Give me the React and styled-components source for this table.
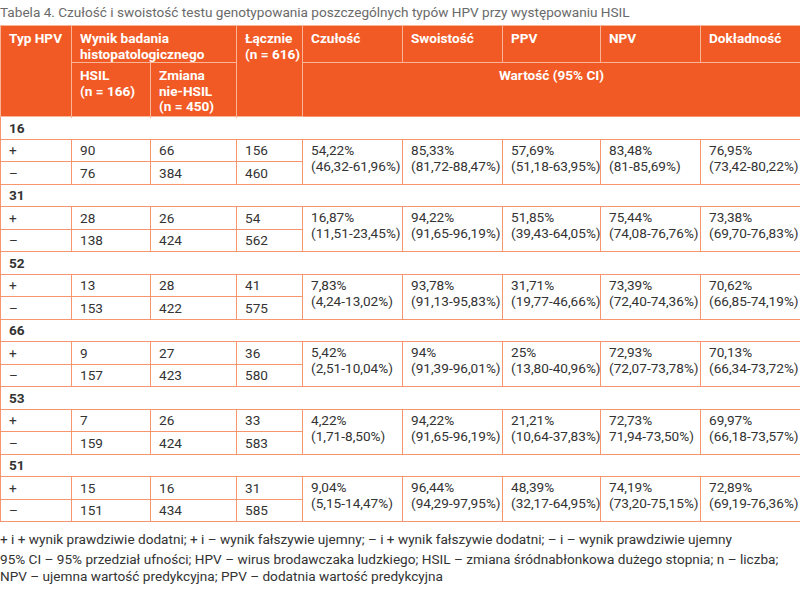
import React, { Fragment } from 'react';
import styled, { createGlobalStyle } from 'styled-components';

const GlobalStyle = createGlobalStyle`
  body {
    margin: 0;
    background: #fff;
    font-family: Roboto, "Liberation Sans", sans-serif;
  }
`;

//Data
const groups = [
  {
    type: '16',
    plus: ['90', '66', '156'],
    minus: ['76', '384', '460'],
    stats: [['54,22%', '(46,32-61,96%)'], ['85,33%', '(81,72-88,47%)'], ['57,69%', '(51,18-63,95%)'], ['83,48%', '(81-85,69%)'], ['76,95%', '(73,42-80,22%)']],
  },
  {
    type: '31',
    plus: ['28', '26', '54'],
    minus: ['138', '424', '562'],
    stats: [['16,87%', '(11,51-23,45%)'], ['94,22%', '(91,65-96,19%)'], ['51,85%', '(39,43-64,05%)'], ['75,44%', '(74,08-76,76%)'], ['73,38%', '(69,70-76,83%)']],
  },
  {
    type: '52',
    plus: ['13', '28', '41'],
    minus: ['153', '422', '575'],
    stats: [['7,83%', '(4,24-13,02%)'], ['93,78%', '(91,13-95,83%)'], ['31,71%', '(19,77-46,66%)'], ['73,39%', '(72,40-74,36%)'], ['70,62%', '(66,85-74,19%)']],
  },
  {
    type: '66',
    plus: ['9', '27', '36'],
    minus: ['157', '423', '580'],
    stats: [['5,42%', '(2,51-10,04%)'], ['94%', '(91,39-96,01%)'], ['25%', '(13,80-40,96%)'], ['72,93%', '(72,07-73,78%)'], ['70,13%', '(66,34-73,72%)']],
  },
  {
    type: '53',
    plus: ['7', '26', '33'],
    minus: ['159', '424', '583'],
    stats: [['4,22%', '(1,71-8,50%)'], ['94,22%', '(91,65-96,19%)'], ['21,21%', '(10,64-37,83%)'], ['72,73%', '71,94-73,50%)'], ['69,97%', '(66,18-73,57%)']],
  },
  {
    type: '51',
    plus: ['15', '16', '31'],
    minus: ['151', '434', '585'],
    stats: [['9,04%', '(5,15-14,47%)'], ['96,44%', '(94,29-97,95%)'], ['48,39%', '(32,17-64,95%)'], ['74,19%', '(73,20-75,15%)'], ['72,89%', '(69,19-76,36%)']],
  },
];

const widths = [71, 79, 86, 66, 100, 100, 98, 100, 100];

const App = () => {
  return (
    <Fragment>
      <GlobalStyle />
      <Page>
        <Caption>Tabela 4. Czułość i swoistość testu genotypowania poszczególnych typów HPV przy występowaniu HSIL</Caption>
        <Table>
          <colgroup>
            {widths.map((w, i) => <col key={i} style={{ width: w }} />)}
          </colgroup>
          <thead>
            <tr>
              <Th rowSpan={3}>Typ HPV</Th>
              <Th colSpan={2} $h={36}>Wynik badania<br />histopatologicznego</Th>
              <Th rowSpan={3} $nowrap>Łącznie<br />(n = 616)</Th>
              <Th $h={36}>Czułość</Th>
              <Th>Swoistość</Th>
              <Th>PPV</Th>
              <Th>NPV</Th>
              <Th>Dokładność</Th>
            </tr>
            <tr>
              <Th rowSpan={2}>HSIL<br />(n = 166)</Th>
              <Th rowSpan={2}>Zmiana<br />nie-HSIL<br />(n = 450)</Th>
              <Th colSpan={5} $center $h={54}>Wartość (95% CI)</Th>
            </tr>
            <tr />
          </thead>
          <tbody>
            {groups.map(g => (
              <Fragment key={g.type}>
                <tr>
                  <GroupCell colSpan={9}>{g.type}</GroupCell>
                </tr>
                <tr>
                  <Td>+</Td>
                  {g.plus.map((v, i) => <Td key={i}>{v}</Td>)}
                  {g.stats.map((s, i) => (
                    <StatCell key={i} rowSpan={2}>{s[0]}<br />{s[1]}</StatCell>
                  ))}
                </tr>
                <tr>
                  <Td>–</Td>
                  {g.minus.map((v, i) => <Td key={i}>{v}</Td>)}
                </tr>
              </Fragment>
            ))}
          </tbody>
        </Table>
        <Notes>
          <p>+ i + wynik prawdziwie dodatni; + i – wynik fałszywie ujemny; – i + wynik fałszywie dodatni; – i – wynik prawdziwie ujemny</p>
          <p>95% CI – 95% przedział ufności; HPV – wirus brodawczaka ludzkiego; HSIL – zmiana śródnabłonkowa dużego stopnia; n – liczba; NPV – ujemna wartość predykcyjna; PPV – dodatnia wartość predykcyjna</p>
        </Notes>
      </Page>
    </Fragment>
  );
};

const Page = styled.div`
  width: 800px;
  height: 593px;
  overflow: hidden;
  color: #333;
`;

const Caption = styled.div`
  font-size: 13.6px;
  line-height: 16px;
  color: #6a6a6a;
  padding: 4px 0 0 0;
  height: 21px;
`;

const Table = styled.table`
  width: 800px;
  table-layout: fixed;
  border-collapse: collapse;
  font-size: 13.6px;
  border: 1px solid #f4703c;
`;

const Th = styled.th`
  background: #f15a24;
  color: #fff;
  font-weight: 700;
  text-align: ${p => (p.$center ? 'center' : 'left')};
  vertical-align: top;
  line-height: 15.5px;
  padding: 5px ${p => (p.$nowrap ? '4px' : '8px')} 0 8px;
  white-space: ${p => (p.$nowrap ? 'nowrap' : 'normal')};
  height: ${p => (p.$h ? `${p.$h}px` : 'auto')};
  border: 1px solid #f9b597;
  box-sizing: border-box;
`;

const Td = styled.td`
  height: 22.5px;
  padding: 0 8px;
  line-height: 16px;
  border: 1px solid #f7966d;
  vertical-align: middle;
  box-sizing: border-box;
`;

const GroupCell = styled.td`
  height: 22.5px;
  padding: 0 8px;
  font-weight: 700;
  border: 1px solid #f7966d;
  box-sizing: border-box;
`;

const StatCell = styled.td`
  padding: 2px 4px 0 8px;
  line-height: 16px;
  vertical-align: top;
  border: 1px solid #f7966d;
  white-space: nowrap;
`;

const Notes = styled.div`
  font-size: 13.6px;
  line-height: 17px;
  color: #333;
  padding-top: 9px;
  p {
    margin: 0 0 3px;
  }
`;

export default App;
